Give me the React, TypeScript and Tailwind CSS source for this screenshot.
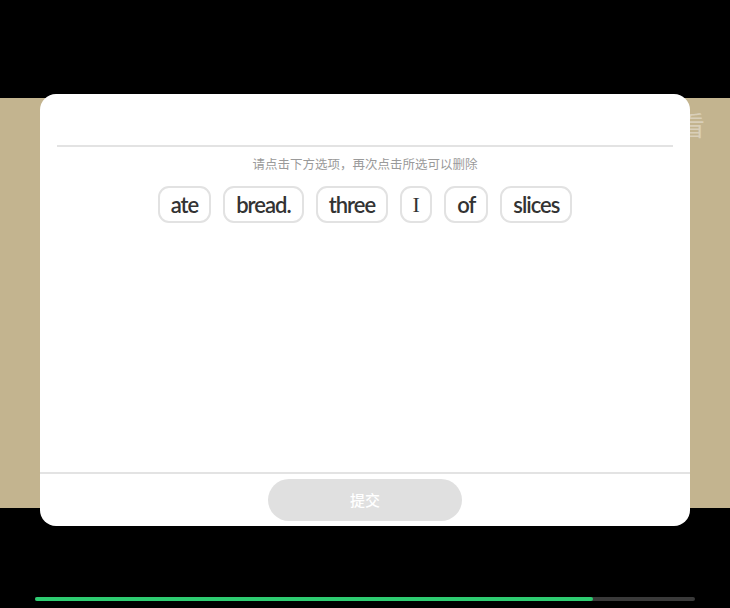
import React from 'react';

const words = ['ate', 'bread.', 'three', 'I', 'of', 'slices'];

export default function App() {
  return (
    <div className="relative w-[730px] h-[608px] bg-black overflow-hidden" style={{ fontFamily: '"Noto Sans CJK SC", sans-serif' }}>
      {/* Page behind the dialog */}
      <div className="h-[98px]" />
      <div className="h-[410px] bg-[#c3b48f] flex justify-end">
        <div className="pt-[13px] pr-[25px] text-[27px] leading-none text-[#d9cfb9]">看</div>
      </div>
      <div className="pt-[89px] px-[35px]">
        <div className="h-[4px] rounded-full bg-[#3a3a3a] flex">
          <div className="w-[558px] h-full rounded-full bg-[#2ecc71]" />
        </div>
      </div>

      {/* Dialog */}
      <div className="absolute left-[40px] top-[94px] w-[650px] h-[432px] bg-white rounded-[16px] flex flex-col">
        <div className="px-[17px] pt-[51px]">
          <div className="h-[2px] bg-[#e3e3e3]" />
        </div>
        <p className="mt-[9px] text-center text-[12.5px] leading-[16px] text-[#9a9a9a]">请点击下方选项，再次点击所选可以删除</p>
        <div className="mt-[14px] flex justify-center gap-[12px]">
          {words.map((w) => (
            <div
              key={w}
              className={`h-[37px] flex items-center justify-center border-2 border-[#e2e2e2] rounded-[11px] text-[22px] leading-none text-[#333] ${
                w === 'I' ? 'w-[32px] font-normal' : 'px-[11px] font-semibold tracking-[-1px]'
              }`}
              style={{ fontFamily: w === 'I' ? '"Liberation Serif", serif' : 'Lato, sans-serif' }}
            >
              {w}
            </div>
          ))}
        </div>
        <div className="flex-1" />
        <div className="h-[2px] bg-[#e3e3e3]" />
        <div className="h-[52px] flex justify-center pt-[5px]">
          <button className="w-[194px] h-[42px] rounded-full bg-[#e0e0e0] text-white text-[15px] font-medium">提交</button>
        </div>
      </div>
    </div>
  );
}
